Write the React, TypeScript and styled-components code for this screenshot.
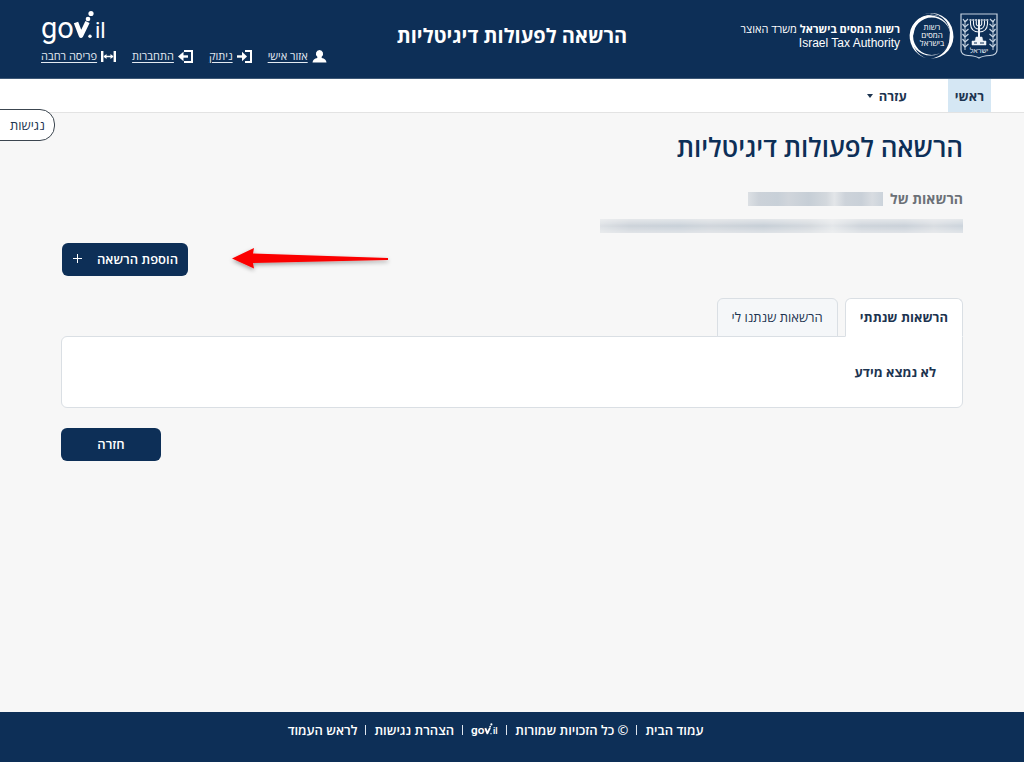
import React from "react";
import styled, { createGlobalStyle, css } from "styled-components";

const navy = "#0d2f57";
const ink = "#1d3450";
const line = "#dadfe4";
const hebrew = `"Open Sans", "Liberation Sans", sans-serif`;

const Global = createGlobalStyle`
  *, *::before, *::after { box-sizing: border-box; }
  body {
    margin: 0;
    background: #f7f7f7;
    color: ${ink};
    font-family: ${hebrew};
    font-size: 14px;
    line-height: 20px;
  }
  button { font-family: inherit; cursor: pointer; }
  h1, p { margin: 0; }
  svg { display: block; flex: none; overflow: visible; }
`;

const Page = styled.div`
  min-height: 100vh;
  display: flex;
  flex-direction: column;
  position: relative;
`;

const Header = styled.header`
  background: ${navy};
  color: #fff;
  min-height: 79px;
  display: grid;
  grid-template-columns: 1fr auto 1fr;
  border-bottom: 1px solid #3d5876;
`;

const Brand = styled.div`
  display: flex;
  align-items: center;
  gap: 6px;
  padding: 0 26px 7px 0;
`;

const BrandText = styled.div`
  font-size: 11px;
  line-height: 14px;
  padding-right: 3px;
  white-space: nowrap;
`;

const English = styled.div`
  font-family: "Liberation Sans", Arial, sans-serif;
  font-size: 12px;
`;

const SiteTitle = styled.div`
  font-size: 20px;
  line-height: 28px;
  font-weight: 700;
  padding-top: 22px;
  white-space: nowrap;
`;

const UserArea = styled.div`
  display: flex;
  flex-direction: column;
  align-items: flex-end;
  padding: 10px 0 0 41px;
`;

const UserLinks = styled.nav`
  display: flex;
  gap: 16px;
  margin-top: 1px;
`;

const UserLink = styled.a`
  display: flex;
  align-items: center;
  gap: 4px;
  color: #e3eaf2;
  font-size: 11px;
  line-height: 16px;
  white-space: nowrap;
  text-decoration: underline;
  text-underline-offset: 2px;
`;

const NavBar = styled.nav`
  display: flex;
  height: 34px;
  padding-right: 33px;
  gap: 34px;
  background: #fff;
  border-bottom: 1px solid #e3e3e3;
`;

const navItem = css`
  display: flex;
  align-items: center;
  gap: 6px;
  padding: 0 7px;
  border: 0;
  color: ${ink};
  font-size: 13px;
  line-height: 20px;
  font-weight: 700;
  text-decoration: none;
`;

const NavLink = styled.a`
  ${navItem}
  background: #d5e7f4;
`;

const NavMenuButton = styled.button`
  ${navItem}
  background: none;
`;

const Caret = styled.span`
  border: 3px solid transparent;
  border-top: 4px solid ${ink};
  border-bottom: 0;
`;

const AccessibilityButton = styled.button`
  position: absolute;
  left: -1px;
  top: 109px;
  height: 32px;
  padding: 0 9px 0 10px;
  border: 1px solid #3c4650;
  border-radius: 0 15px 15px 0;
  background: #fff;
  color: ${ink};
  font-size: 13px;
`;

const Main = styled.main`
  flex: 1;
  padding: 16px 61px 40px;
`;

const PageTitle = styled.h1`
  color: ${navy};
  font-size: 26px;
  line-height: 36px;
  font-weight: 600;
`;

const OwnerRow = styled.p`
  display: flex;
  align-items: center;
  gap: 7px;
  margin-top: 24px;
  color: #6c7177;
  font-weight: 700;
`;

const Redacted = styled.span<{ $width: number }>`
  width: ${(p) => p.$width}px;
  max-width: 100%;
  height: 14px;
  display: block;
  background: linear-gradient(
    90deg,
    #dce0e4 0%, #ccd2d9 8%, #c8d0d8 22%, #d0d5db 30%, #c6ced6 45%,
    #d3d8dd 58%, #e3e6e9 64%, #cdd3da 72%, #c9d0d8 84%, #d8dce1 92%, #cbd3db 100%
  );
`;

const NoteRow = styled.div`
  margin-top: 10px;
`;

const Soften = styled(Redacted)`
  -webkit-mask-image: linear-gradient(rgba(0, 0, 0, 0.4), #000 50%, rgba(0, 0, 0, 0.5));
  mask-image: linear-gradient(rgba(0, 0, 0, 0.4), #000 50%, rgba(0, 0, 0, 0.5));
`;

const ActionRow = styled.div`
  display: flex;
  justify-content: flex-end;
  align-items: center;
  gap: 44px;
  margin-top: 10px;
  padding-left: 1px;
`;

const PrimaryButton = styled.button<{ $width: number }>`
  display: flex;
  align-items: center;
  justify-content: center;
  gap: 14px;
  width: ${(p) => p.$width}px;
  height: 33px;
  padding: 0 0 2px;
  border: 0;
  border-radius: 6px;
  background: ${navy};
  color: #fff;
  font-size: 13px;
  font-weight: 600;
  white-space: nowrap;
`;

const Tabs = styled.div`
  display: flex;
  gap: 7px;
  margin-top: 22px;
`;

const Tab = styled.button<{ $active?: boolean }>`
  height: 39px;
  margin-bottom: -1px;
  padding: 0 14px 2px;
  border: 1px solid ${line};
  border-bottom-color: ${(p) => (p.$active ? "#fff" : line)};
  border-radius: 6px 6px 0 0;
  background: ${(p) => (p.$active ? "#fff" : "#f5f7f9")};
  color: ${ink};
  font-size: 13px;
  font-weight: ${(p) => (p.$active ? 700 : 400)};
  white-space: nowrap;
  position: relative;
`;

const Panel = styled.section`
  min-height: 72px;
  padding: 25px 26px;
  border: 1px solid ${line};
  border-radius: 6px 0 6px 6px;
  background: #fff;
  font-size: 13px;
  font-weight: 700;
`;

const BackRow = styled.div`
  display: flex;
  justify-content: flex-end;
  margin-top: 20px;
`;

const Footer = styled.footer`
  display: flex;
  justify-content: center;
  align-items: flex-start;
  min-height: 50px;
  padding: 8px 33px 0 0;
  background: ${navy};
  color: #fff;
`;

const FooterItem = styled.span`
  display: flex;
  align-items: center;
  height: 20px;
  font-size: 13px;
  font-weight: 600;
  white-space: nowrap;

  & + &::before {
    content: "";
    width: 1px;
    height: 10px;
    margin: 0 8px;
    background: #dfe6ee;
  }
`;

const FooterLink = styled.a`
  color: inherit;
  text-decoration: none;
`;

function GovLogo({ width, height }: { width: number; height: number }) {
  return (
    <svg width={width} height={height} viewBox="0 0 66 37" role="img" aria-label="gov.il" direction="ltr">
      <g fill="#fff" fontFamily="Roboto, Liberation Sans, sans-serif">
        <text x="0" y="28" fontSize="29">go</text>
        <text x="54" y="28" fontSize="22">il</text>
      </g>
      <path d="M35 12.500L40 25.500L46.500 12" fill="none" stroke="#fff" strokeWidth="4.600" strokeLinejoin="round" />
      <circle cx="47" cy="9" r="2.300" fill="#fff" />
      <circle cx="50" cy="3.500" r="2.600" fill="#fff" />
      <circle cx="49" cy="26.300" r="1.700" fill="#fff" />
    </svg>
  );
}

function StateEmblem() {
  return (
    <svg width="38" height="46" viewBox="0 0 38 46" fill="none" stroke="#c5d2e0" aria-hidden="true">
      <path d="M1 1H37V37Q37 42 30 42.500Q22 43 19 45Q16 43 8 42.500Q1 42 1 37Z" strokeWidth="1.200" />
      <path d="M5 37V7M33 37V7" strokeWidth="1" />
      <path
        d="M5 9l-2-3M5 9l3-3M5 14l-2.500-3M5 14l3.500-3M5 19l-2.500-3M5 19l3.500-3M5 24l-2.500-3M5 24l3.500-3M5 29l-2.500-3M5 29l3.500-3M5 34l-2.500-3M5 34l3.500-3M33 9l2-3M33 9l-3-3M33 14l2.500-3M33 14l-3.500-3M33 19l2.500-3M33 19l-3.500-3M33 24l2.500-3M33 24l-3.500-3M33 29l2.500-3M33 29l-3.500-3M33 34l2.500-3M33 34l-3.500-3"
        strokeWidth="1.200"
      />
      <g stroke="#f0f4f8">
        <path d="M10.500 8V11Q11 19 19 19Q27 19 27.500 11V8M13.500 8V11Q14 16 19 16Q24 16 24.500 11V8M16.300 8V11Q16.500 13 19 13Q21.500 13 21.700 11V8" strokeWidth="1.100" />
        <path d="M19 7V28" strokeWidth="2" />
        <path d="M9.500 7H28.500" strokeWidth="1.400" strokeDasharray="2 0.800" />
        <path d="M16 24H22L23 28H26V32H12V28H15Z" fill="#f0f4f8" strokeWidth="0.500" />
      </g>
      <path d="M14 30h3M20 30h4" stroke={navy} strokeWidth="1" />
      <text x="19" y="40" textAnchor="middle" fontSize="7" fill="#e4ebf3" stroke="none" fontFamily="Liberation Sans, sans-serif">
        ישראל
      </text>
    </svg>
  );
}

function TaxLogo() {
  return (
    <svg width="45" height="46" viewBox="0 0 45 46" fill="#fff" aria-hidden="true">
      <path
        fillRule="evenodd"
        d="M21.500 2.500A20 20 0 1 0 21.500 42.500A20 20 0 1 0 21.500 2.500ZM22.800 4.500A18.700 18.700 0 1 1 22.800 41.900A18.700 18.700 0 1 1 22.800 4.500Z"
      />
      <path d="M32 4A22 22 0 0 0 1.500 17A23 23 0 0 0 18 45.500A20 20 0 0 1 5 19A19 19 0 0 1 32 4Z" />
      <path d="M13 2A22 22 0 0 1 44 19A22 22 0 0 1 22 45.500A21 21 0 0 0 40.500 25A20 20 0 0 0 13 2Z" />
      <g fontSize="8" textAnchor="middle" fontFamily="Open Sans, Liberation Sans, sans-serif">
        <text x="23" y="17">רשות</text>
        <text x="23" y="25">המסים</text>
        <text x="23" y="33">בישראל</text>
      </g>
    </svg>
  );
}

const iconProps = { width: 15, height: 13, viewBox: "0 0 15 13", fill: "none", stroke: "#fff", strokeWidth: 2, "aria-hidden": true } as const;

const UserIcon = () => (
  <svg {...iconProps} fill="#fff" stroke="none">
    <path d="M7.500 0a3.600 3.800 0 0 1 2.200 6.800v1.200q4.300.8 4.800 4.500H.5Q1 8.800 5.300 8V6.800A3.600 3.800 0 0 1 7.500 0Z" />
  </svg>
);
const LogoutIcon = () => (
  <svg {...iconProps}>
    <path d="M8 1H14V12H8" />
    <path d="M0 6.500H6" strokeWidth="2.400" />
    <path d="M5 1.800L10 6.500L5 11.200Z" fill="#fff" stroke="none" />
  </svg>
);
const LoginIcon = () => (
  <svg {...iconProps}>
    <path d="M6 1H14V12H6" />
    <path d="M4 6.500H10" strokeWidth="2.400" />
    <path d="M5.500 1.800L0 6.500L5.500 11.200Z" fill="#fff" stroke="none" />
  </svg>
);
const WidthIcon = () => (
  <svg {...iconProps}>
    <path d="M1.200 1V12M13.800 1V12" strokeWidth="2.400" />
    <path d="M3 6.500H12" strokeWidth="1.500" />
    <path d="M2.500 6.500L5.500 4V9ZM12.500 6.500L9.500 4V9Z" fill="#fff" stroke="none" />
  </svg>
);

const PlusIcon = () => (
  <svg width="11" height="11" viewBox="0 0 11 11" stroke="#fff" aria-hidden="true">
    <path d="M5.500 1V10M1 5.500H10" />
  </svg>
);

const Arrow = () => (
  <svg width="158" height="28" viewBox="0 0 158 28" aria-hidden="true">
    <defs>
      <filter id="arrowShadow" x="-5%" y="-30%" width="110%" height="180%">
        <feDropShadow dx="0" dy="2" stdDeviation="2" floodOpacity="0.35" />
      </filter>
    </defs>
    <path d="M0 12.500L22 2L21 7.500L156 12V14L21 17L22 22.500Z" fill="#fb0000" filter="url(#arrowShadow)" />
  </svg>
);

export default function App() {
  return (
    <Page dir="rtl" lang="he">
      <Global />
      <Header>
        <Brand>
          <StateEmblem />
          <TaxLogo />
          <BrandText>
            <div>
              <b>רשות המסים בישראל</b> משרד האוצר
            </div>
            <English>Israel Tax Authority</English>
          </BrandText>
        </Brand>
        <SiteTitle>הרשאה לפעולות דיגיטליות</SiteTitle>
        <UserArea>
          <GovLogo width={66} height={37} />
          <UserLinks>
            <UserLink href="#personal"><UserIcon />אזור אישי</UserLink>
            <UserLink href="#logout"><LogoutIcon />ניתוק</UserLink>
            <UserLink href="#login"><LoginIcon />התחברות</UserLink>
            <UserLink href="#wide"><WidthIcon />פריסה רחבה</UserLink>
          </UserLinks>
        </UserArea>
      </Header>

      <NavBar>
        <NavLink href="#main">ראשי</NavLink>
        <NavMenuButton type="button" aria-haspopup="menu">
          עזרה <Caret />
        </NavMenuButton>
      </NavBar>
      <AccessibilityButton type="button">נגישות</AccessibilityButton>

      <Main>
        <PageTitle>הרשאה לפעולות דיגיטליות</PageTitle>
        <OwnerRow>
          הרשאות של <Redacted $width={135} />
        </OwnerRow>
        <NoteRow>
          <Soften $width={363} />
        </NoteRow>
        <ActionRow>
          <Arrow />
          <PrimaryButton type="button" $width={126}>
            הוספת הרשאה <PlusIcon />
          </PrimaryButton>
        </ActionRow>

        <Tabs role="tablist">
          <Tab type="button" role="tab" aria-selected="true" $active>הרשאות שנתתי</Tab>
          <Tab type="button" role="tab" aria-selected="false">הרשאות שנתנו לי</Tab>
        </Tabs>
        <Panel role="tabpanel">לא נמצא מידע</Panel>
        <BackRow>
          <PrimaryButton type="button" $width={100}>חזרה</PrimaryButton>
        </BackRow>
      </Main>

      <Footer>
        <FooterItem><FooterLink href="#home">עמוד הבית</FooterLink></FooterItem>
        <FooterItem>© כל הזכויות שמורות</FooterItem>
        <FooterItem><GovLogo width={27} height={15} /></FooterItem>
        <FooterItem><FooterLink href="#accessibility">הצהרת נגישות</FooterLink></FooterItem>
        <FooterItem><FooterLink href="#top">לראש העמוד</FooterLink></FooterItem>
      </Footer>
    </Page>
  );
}
